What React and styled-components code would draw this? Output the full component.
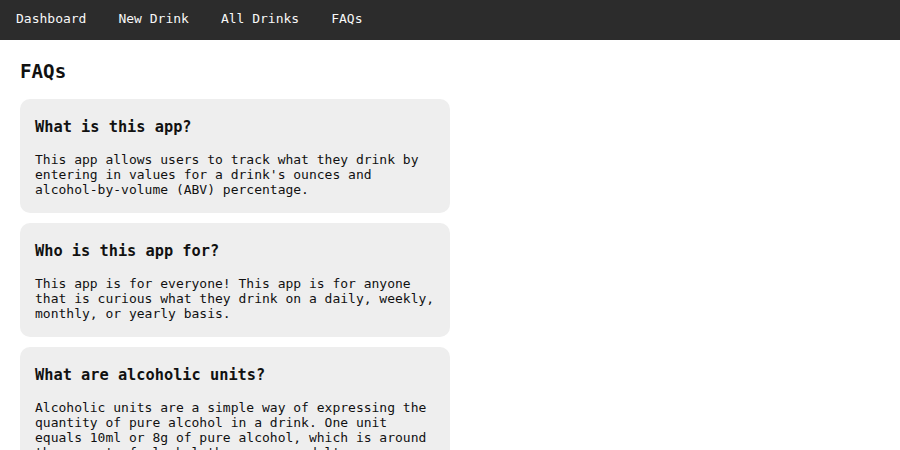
import styled, { createGlobalStyle } from "styled-components";

const GlobalStyle = createGlobalStyle`
  body {
    margin: 0;
    background: #ffffff;
    font-family: "DejaVu Sans Mono", "Liberation Mono", monospace;
    color: #111111;
  }
`;

const faqs = [
  {
    q: "What is this app?",
    a: "This app allows users to track what they drink by entering in values for a drink's ounces and alcohol-by-volume (ABV) percentage.",
  },
  {
    q: "Who is this app for?",
    a: "This app is for everyone! This app is for anyone that is curious what they drink on a daily, weekly, monthly, or yearly basis.",
  },
  {
    q: "What are alcoholic units?",
    a: "Alcoholic units are a simple way of expressing the quantity of pure alcohol in a drink. One unit equals 10ml or 8g of pure alcohol, which is around the amount of alcohol the average adult can process in an hour.",
  },
];

const App = () => {
  return (
    <>
      <GlobalStyle />
      <StyledNav>
        <NavLink>Dashboard</NavLink>
        <NavLink>New Drink</NavLink>
        <NavLink>All Drinks</NavLink>
        <NavLink>FAQs</NavLink>
      </StyledNav>
      <Main>
        <Title>FAQs</Title>
        <CardList>
          {faqs.map((item) => (
            <Card key={item.q}>
              <Question>{item.q}</Question>
              <Answer>{item.a}</Answer>
            </Card>
          ))}
        </CardList>
      </Main>
    </>
  );
};

export default App;

const StyledNav = styled.nav`
  height: 40px;
  box-sizing: border-box;
  padding-bottom: 3px;
  display: flex;
  align-items: center;
  background-color: #2c2c2c;
`;

const NavLink = styled.a`
  padding: 0 16px;
  font-size: 13px;
  color: #f8f8f8;
  cursor: pointer;
  &:hover {
    color: #cccccc;
  }
`;

const Main = styled.main`
  padding: 20px 20px 20px;
`;

const Title = styled.h2`
  margin: 0 0 16px;
  font-size: 19.2px;
  font-weight: bold;
`;

const CardList = styled.div`
  display: flex;
  flex-direction: column;
  gap: 10px;
`;

const Card = styled.section`
  width: 430px;
  box-sizing: border-box;
  padding: 19px 15px 16px;
  background-color: #eeeeee;
  border-radius: 10px;
`;

const Question = styled.h3`
  margin: 0 0 16px;
  font-size: 15.3px;
  font-weight: bold;
`;

const Answer = styled.p`
  margin: 0;
  font-size: 13px;
  line-height: 15px;
`;
